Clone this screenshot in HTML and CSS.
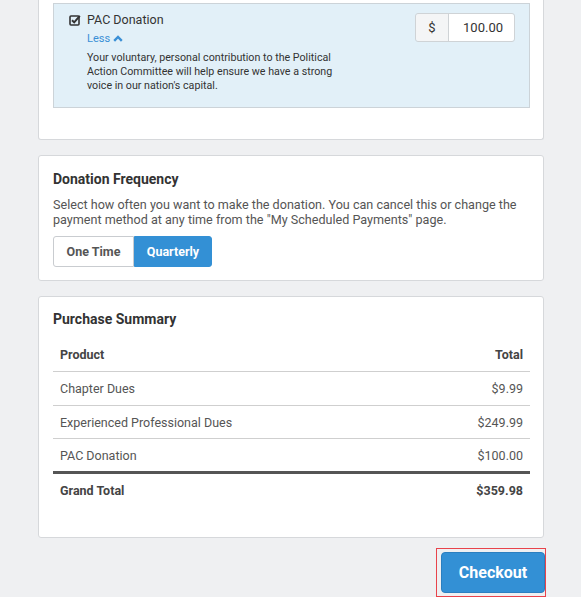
FILE: index.html
```html
<!DOCTYPE html>
<html lang="en">

<head>
  <meta charset="UTF-8">
  <meta name="viewport" content="width=device-width, initial-scale=1.0">
  <title>Checkout</title>
  <link rel="stylesheet" href="styles.css">
</head>

<body>
  <div class="page">

    <!-- donation item -->
    <div class="card card-items">
      <div class="donation">
        <div class="donation-main">
          <svg class="check" width="12" height="12" viewBox="0 0 12 12">
            <rect x="1" y="2" width="9" height="9" rx="1" fill="none" stroke="#333" stroke-width="1.6" />
            <path d="M3 6.2 L5.2 8.4 L10.8 1.8" fill="none" stroke="#333" stroke-width="2" />
          </svg>
          <div class="donation-text">
            <div class="donation-name">PAC Donation</div>
            <a class="less" href="javascript:void(0);">Less
              <svg width="10" height="7" viewBox="0 0 10 7">
                <path d="M1.2 5.8 L5 2 L8.8 5.8" fill="none" stroke="#3a8fd6" stroke-width="2.4" />
              </svg>
            </a>
            <p class="donation-desc">Your voluntary, personal contribution to the Political Action Committee will help ensure we have a strong voice in our nation's capital.</p>
          </div>
        </div>
        <div class="amount">
          <span class="amount-addon">$</span>
          <span class="amount-input">100.00</span>
        </div>
      </div>
    </div>

    <!-- frequency -->
    <div class="card">
      <h3 class="card-title">Donation Frequency</h3>
      <p class="card-text">Select how often you want to make the donation. You can cancel this or change the payment method at any time from the "My Scheduled Payments" page.</p>
      <div class="toggle">
        <button class="toggle-btn">One Time</button>
        <button class="toggle-btn active">Quarterly</button>
      </div>
    </div>

    <!-- summary -->
    <div class="card card-summary">
      <h3 class="card-title">Purchase Summary</h3>
      <table class="summary">
        <thead>
          <tr>
            <th>Product</th>
            <th class="num">Total</th>
          </tr>
        </thead>
        <tbody>
          <tr class="first">
            <td>Chapter Dues</td>
            <td class="num">$9.99</td>
          </tr>
          <tr>
            <td>Experienced Professional Dues</td>
            <td class="num">$249.99</td>
          </tr>
          <tr>
            <td>PAC Donation</td>
            <td class="num">$100.00</td>
          </tr>
        </tbody>
        <tfoot>
          <tr>
            <td>Grand Total</td>
            <td class="num">$359.98</td>
          </tr>
        </tfoot>
      </table>
    </div>

    <div class="actions">
      <div class="checkout-wrap">
        <button class="checkout">Checkout</button>
      </div>
    </div>

  </div>
</body>

</html>
```

FILE: styles.css
```css
body {
  margin: 0;
  background: #eff0f2;
  font-family: Roboto, "Liberation Sans", sans-serif;
  color: #444;
}

.page {
  width: 506px;
  margin: -11px 0 0 38px;
  display: flex;
  flex-direction: column;
  gap: 15px;
}

.card {
  background: #fff;
  border: 1px solid #d6d8db;
  border-radius: 3px;
  padding: 14px 13px 13px 14px;
}

.card-items {
  padding-bottom: 31px;
  border-top: none;
}

/* PAC donation panel */

.donation {
  display: flex;
  justify-content: space-between;
  align-items: flex-start;
  background: #e2f0f8;
  border: 1px solid #ccd3d8;
  padding: 9px 14px 14px 15px;
}

.donation-main {
  display: flex;
  gap: 6px;
}

.check {
  margin-top: 1px;
}

.donation-name {
  font-size: 12.5px;
  line-height: 14px;
  color: #333;
}

.less {
  display: flex;
  align-items: center;
  gap: 3px;
  margin-top: 5px;
  font-size: 11px;
  color: #3a8fd6;
  text-decoration: none;
}

.donation-desc {
  width: 255px;
  margin: 6px 0 0;
  font-size: 10.7px;
  line-height: 14px;
  color: #333;
}

.amount {
  display: flex;
  height: 27px;
  border: 1px solid #cfd3d6;
  border-radius: 3px;
  font-size: 13px;
  color: #333;
}

.amount-addon {
  width: 32px;
  display: flex;
  align-items: center;
  justify-content: center;
  background: #f4f5f6;
  border-right: 1px solid #cfd3d6;
  border-radius: 3px 0 0 3px;
}

.amount-input {
  width: 54px;
  display: flex;
  align-items: center;
  justify-content: flex-end;
  padding-right: 11px;
  background: #fff;
  border-radius: 0 3px 3px 0;
}

/* cards */

.card-title {
  margin: 1px 0 0;
  font-size: 14px;
  line-height: 17px;
  font-weight: 700;
  color: #333;
}

.card-text {
  margin: 9px 0 0;
  font-size: 12.6px;
  line-height: 15px;
  color: #555;
}

.toggle {
  display: flex;
  margin-top: 9px;
}

.toggle-btn {
  width: 81px;
  height: 31px;
  padding: 0;
  font-family: inherit;
  font-size: 12.5px;
  font-weight: 700;
  color: #555;
  background: #fff;
  border: 1px solid #c9ccd0;
  border-radius: 3px 0 0 3px;
}

.toggle-btn.active {
  width: 78px;
  color: #fff;
  background: #3390d5;
  border-color: #3390d5;
  border-radius: 0 3px 3px 0;
}

/* summary table */

.card-summary {
  padding-top: 13px;
  padding-bottom: 31px;
}

.summary {
  width: 100%;
  margin-top: 9px;
  border-collapse: collapse;
  font-size: 12.5px;
  color: #555;
}

.summary th,
.summary td {
  padding: 0 7px;
  height: 33px;
  text-align: left;
}

.summary th {
  height: 34px;
  font-weight: 700;
  color: #444;
  border-bottom: 1px solid #cfcfcf;
}

.summary tbody td {
  height: 32px;
  border-bottom: 1px solid #cfcfcf;
}

.summary tbody .first td {
  height: 33px;
}

.summary tbody tr:last-child td {
  border-bottom: 3px solid #555;
}

.summary tfoot td {
  font-weight: 700;
  color: #444;
  height: 32px;
}

.summary .num {
  text-align: right;
}

/* checkout */

.actions {
  display: flex;
  justify-content: flex-end;
  margin: -5px -2px 0 0;
}

.checkout-wrap {
  border: 1px solid #e8434b;
  padding: 3px 0 3px 4px;
}

.checkout {
  width: 104px;
  height: 41px;
  font-family: inherit;
  font-size: 16px;
  font-weight: 700;
  color: #fff;
  background: #3390d5;
  border: 1px solid #2b7fc0;
  border-radius: 4px;
}
```
